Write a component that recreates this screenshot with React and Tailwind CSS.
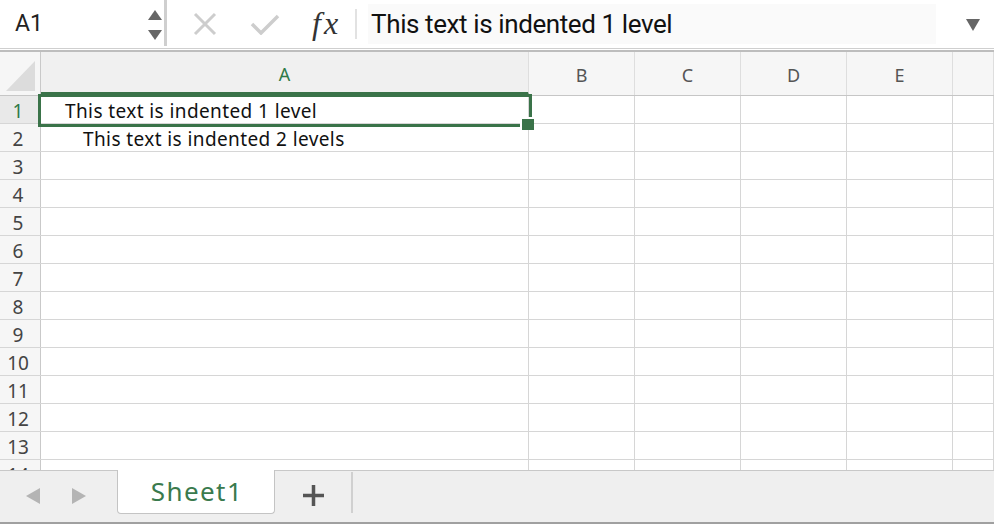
import React from "react";

const cols = [
  { key: "A", w: "w-[488px]" },
  { key: "B", w: "w-[106px]" },
  { key: "C", w: "w-[106px]" },
  { key: "D", w: "w-[106px]" },
  { key: "E", w: "w-[106px]" },
  { key: "F", w: "flex-1" },
];

const cells = {
  1: "This text is indented 1 level",
  2: "This text is indented 2 levels",
};

const rows = Array.from({ length: 14 }, (_, i) => i + 1);

const FormulaBar = () => (
  <div className="h-[48px] flex items-stretch bg-white">
    {/* name box */}
    <div className="w-[164px] flex items-center justify-between pl-[15px] pr-[2px]">
      <span className="text-[23px] text-[#222] font-['Roboto',sans-serif]">A1</span>
      <div className="flex flex-col gap-[10px] mt-[1px]">
        <svg width="14" height="10" viewBox="0 0 14 10">
          <path d="M7 0 L14 10 L0 10 Z" fill="#666" />
        </svg>
        <svg width="14" height="10" viewBox="0 0 14 10">
          <path d="M0 0 L14 0 L7 10 Z" fill="#666" />
        </svg>
      </div>
    </div>
    <div className="w-[3px] bg-[#cfcfcf] mb-[2px]" />
    {/* cancel / enter / fx */}
    <div className="flex items-center pl-[26px]">
      <svg width="24" height="24" viewBox="0 0 24 24">
        <path d="M2 2 L22 22 M22 2 L2 22" stroke="#cdcdcd" strokeWidth="3" />
      </svg>
      <svg width="30" height="22" viewBox="0 0 30 22" className="ml-[33px]">
        <path d="M2 11 L11 20 L28 3" stroke="#cdcdcd" strokeWidth="3.5" fill="none" />
      </svg>
      <span className="ml-[32px] text-[32px] italic text-[#333] font-['Liberation_Serif',serif] tracking-[3px] -mt-[3px]">
        fx
      </span>
    </div>
    <div className="flex items-center ml-[14px]">
      <div className="w-[2px] h-[30px] bg-[#e2e2e2]" />
    </div>
    <div className="flex-1 flex items-center pl-[11px] pr-[14px]">
      <div className="flex-1 h-[40px] bg-[#fafafa] flex items-center pl-[3px]">
        <span className="text-[26px] text-[#111] font-['Roboto',sans-serif] tracking-[-0.4px]">
          This text is indented 1 level
        </span>
      </div>
      <svg width="14" height="12" viewBox="0 0 14 12" className="ml-[30px] mt-[2px]">
        <path d="M0 0 L14 0 L7 12 Z" fill="#666" />
      </svg>
    </div>
  </div>
);

const Sheet = () => (
  <div className="relative flex-1 overflow-hidden bg-white font-['Noto_Sans',sans-serif]">
    {/* column header row */}
    <div className="h-[44px] flex bg-[#f6f6f6] border-b border-[#c6c6c6]">
      <div className="w-[41px] h-full border-r border-[#c9c9c9] relative bg-[#f6f6f6]">
        <svg width="41" height="43" viewBox="0 0 41 43" className="absolute left-0 top-0">
          <path d="M6 39 L35 39 L35 9 Z" fill="#dcdcdc" />
        </svg>
      </div>
      {cols.map((c) => (
        <div
          key={c.key}
          className={`${c.w} h-full flex items-center justify-center border-r border-[#dedede] text-[18px] pt-[4px] ${
            c.key === "A" ? "bg-[#f0f0f0] text-[#2f7a47] border-b-[3px] border-b-[#3a7349]" : "text-[#555]"
          }`}
        >
          {c.key === "F" ? "" : c.key}
        </div>
      ))}
    </div>
    {/* grid rows */}
    {rows.map((r) => (
      <div key={r} className="h-[28px] flex border-b border-[#d6d6d6]">
        <div
          className={`w-[41px] shrink-0 border-r border-[#c9c9c9] flex items-center justify-center pr-[4px] pt-[3px] text-[19px] ${
            r === 1 ? "bg-[#e9e9e9] text-[#2f7a47]" : "bg-[#f6f6f6] text-[#444]"
          }`}
        >
          {r}
        </div>
        {cols.map((c) => (
          <div
            key={c.key}
            className={`${c.w} h-full border-r border-[#d6d6d6] flex items-center pt-[4px] text-[19px] text-[#111] whitespace-nowrap overflow-visible`}
          >
            {c.key === "A" && cells[r] ? (
              <span className={`tracking-[0.4px] ${r === 1 ? "pl-[24px]" : "pl-[42px]"}`}>{cells[r]}</span>
            ) : null}
          </div>
        ))}
      </div>
    ))}
    {/* selection box on A1 */}
    <div className="absolute left-[38px] top-[42px] w-[494px] h-[33px] border-[3px] border-[#3a7349] pointer-events-none" />
    <div className="absolute left-[522px] top-[67px] w-[12px] h-[11px] bg-[#3a7349] border-l-2 border-t-2 border-white box-content -ml-[2px] -mt-[2px]" />
  </div>
);

const TabBar = () => (
  <div className="h-[52px] flex items-stretch bg-[#efefef] border-t border-[#c8c8c8] font-['Noto_Sans',sans-serif]">
    <div className="w-[117px] flex items-center pl-[26px] gap-[32px] pb-[2px]">
      <svg width="14" height="16" viewBox="0 0 14 16">
        <path d="M14 0 L14 16 L0 8 Z" fill="#b4b4b4" />
      </svg>
      <svg width="14" height="16" viewBox="0 0 14 16">
        <path d="M0 0 L14 8 L0 16 Z" fill="#b4b4b4" />
      </svg>
    </div>
    <div className="w-[158px] h-[44px] -mt-px bg-white border-x border-b border-[#c4c4c4] rounded-b-[4px] flex items-center justify-center">
      <span className="text-[26px] text-[#3a7a4d] tracking-[1.4px] pl-[2px]">Sheet1</span>
    </div>
    <div className="w-[76px] flex items-center justify-center pb-[2px]">
      <svg width="21" height="21" viewBox="0 0 21 21">
        <path d="M10.5 0 V21 M0 10.5 H21" stroke="#555" strokeWidth="3.5" />
      </svg>
    </div>
    <div className="flex items-start pt-[1px]">
      <div className="w-[2px] h-[41px] bg-[#d0d0d0]" />
    </div>
  </div>
);

export default function App() {
  return (
    <div className="w-[994px] h-[524px] flex flex-col bg-white overflow-hidden">
      <FormulaBar />
      <div className="h-[4px] border-t border-[#cfcfcf] border-b-2 border-b-[#bdbdbd] bg-white" />
      <Sheet />
      <TabBar />
      <div className="h-[2px] bg-[#a0a0a0]" />
    </div>
  );
}
